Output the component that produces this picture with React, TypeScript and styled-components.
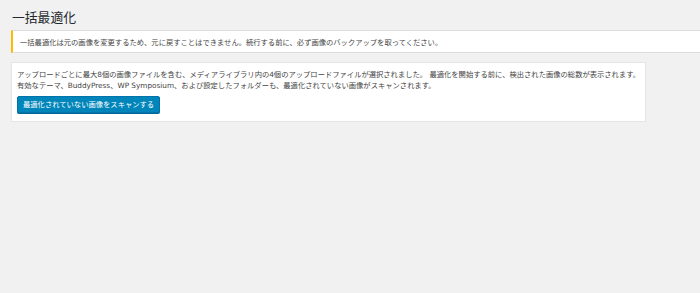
import React from "react";
import styled, { createGlobalStyle } from "styled-components";

const Global = createGlobalStyle`
  html, body { margin: 0; padding: 0; background: #f1f1f1; }
  body { font-family: "DejaVu Sans", "Noto Sans CJK JP", sans-serif; color: #444; }
`;

const Wrap = styled.div`
  padding: 0 0 0 11px;
  display: flex;
  flex-direction: column;
`;

const Title = styled.h1`
  margin: 0;
  padding: 8px 0 0 1px;
  height: 22px;
  box-sizing: border-box;
  font-family: "Noto Sans CJK JP", sans-serif;
  font-weight: 400;
  font-size: 12.8px;
  line-height: 17px;
  color: #23282d;
`;

const Notice = styled.div`
  margin-top: 8px;
  height: 23px;
  box-sizing: border-box;
  background: #fff;
  border-left: 2px solid #ffb900;
  border-top: 1px solid #dcdcdc;
  border-bottom: 1px solid #dcdcdc;
  display: flex;
  align-items: center;
  padding-left: 7px;
  font-size: 7.3px;
  color: #444;
`;

const Card = styled.div`
  margin-top: 9px;
  width: 635px;
  height: 60px;
  box-sizing: border-box;
  background: #fff;
  border: 1px solid #e5e5e5;
  padding: 6px 0 0 5px;
  display: flex;
  flex-direction: column;
  align-items: flex-start;
`;

const Para = styled.p`
  margin: 0;
  font-size: 7.3px;
  line-height: 11px;
  color: #444;
  white-space: nowrap;
`;

const Button = styled.button`
  margin-top: 5px;
  height: 17px;
  padding: 0 5px;
  background: #0085ba;
  border: 1px solid #0073aa;
  border-radius: 2px;
  box-shadow: 0 1px 0 #006799;
  color: #fff;
  font-family: "DejaVu Sans", "Noto Sans CJK JP", sans-serif;
  font-size: 7.3px;
  line-height: 15px;
  cursor: pointer;
`;

export default function App() {
  return (
    <>
      <Global />
      <Wrap>
        <Title>一括最適化</Title>
        <Notice>
          一括最適化は元の画像を変更するため、元に戻すことはできません。続行する前に、必ず画像のバックアップを取ってください。
        </Notice>
        <Card>
          <Para>
            アップロードごとに最大8個の画像ファイルを含む、メディアライブラリ内の4個のアップロードファイルが選択されました。 最適化を開始する前に、検出された画像の総数が表示されます。
          </Para>
          <Para>
            有効なテーマ、BuddyPress、WP Symposium、および設定したフォルダーも、最適化されていない画像がスキャンされます。
          </Para>
          <Button>最適化されていない画像をスキャンする</Button>
        </Card>
      </Wrap>
    </>
  );
}
